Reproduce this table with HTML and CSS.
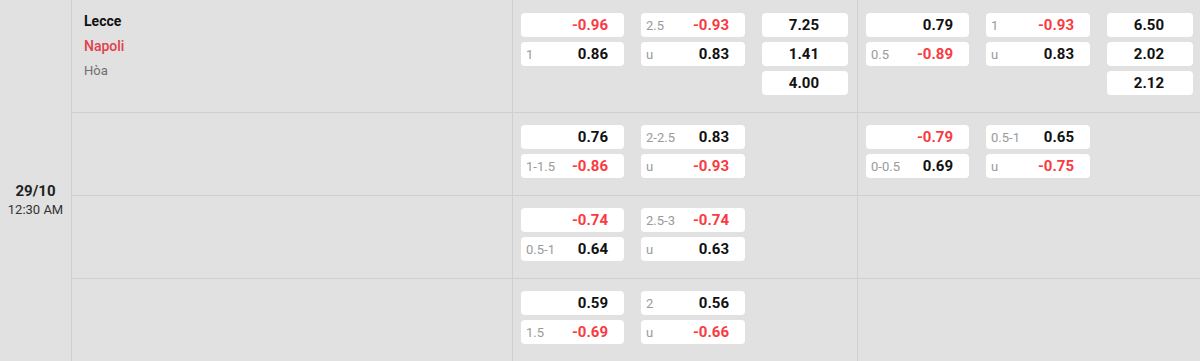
FILE: index.html
```html
<!DOCTYPE html>
<html>
<head>
<meta charset="utf-8">
<link rel="stylesheet" href="styles.css">
</head>
<body>
<div class="match">
  <div class="date">
    <div class="day">29/10</div>
    <div class="time">12:30 AM</div>
  </div>
  <div class="rows">
    <div class="row">
      <div class="teams">
        <div class="home">Lecce</div>
        <div class="away">Napoli</div>
        <div class="draw">Hòa</div>
      </div>
      <div class="odds">
        <div class="col">
          <div class="cell"><span class="v neg">-0.96</span></div>
          <div class="cell"><span class="lbl">1</span><span class="v">0.86</span></div>
        </div>
        <div class="col">
          <div class="cell"><span class="lbl">2.5</span><span class="v neg">-0.93</span></div>
          <div class="cell"><span class="lbl">u</span><span class="v">0.83</span></div>
        </div>
        <div class="col x12">
          <div class="cell"><span class="v">7.25</span></div>
          <div class="cell"><span class="v">1.41</span></div>
          <div class="cell"><span class="v">4.00</span></div>
        </div>
      </div>
      <div class="odds half">
        <div class="col">
          <div class="cell"><span class="v">0.79</span></div>
          <div class="cell"><span class="lbl">0.5</span><span class="v neg">-0.89</span></div>
        </div>
        <div class="col">
          <div class="cell"><span class="lbl">1</span><span class="v neg">-0.93</span></div>
          <div class="cell"><span class="lbl">u</span><span class="v">0.83</span></div>
        </div>
        <div class="col x12">
          <div class="cell"><span class="v">6.50</span></div>
          <div class="cell"><span class="v">2.02</span></div>
          <div class="cell"><span class="v">2.12</span></div>
        </div>
      </div>
    </div>

    <div class="row">
      <div class="teams"></div>
      <div class="odds">
        <div class="col">
          <div class="cell"><span class="v">0.76</span></div>
          <div class="cell"><span class="lbl">1-1.5</span><span class="v neg">-0.86</span></div>
        </div>
        <div class="col">
          <div class="cell"><span class="lbl">2-2.5</span><span class="v">0.83</span></div>
          <div class="cell"><span class="lbl">u</span><span class="v neg">-0.93</span></div>
        </div>
      </div>
      <div class="odds half">
        <div class="col">
          <div class="cell"><span class="v neg">-0.79</span></div>
          <div class="cell"><span class="lbl">0-0.5</span><span class="v">0.69</span></div>
        </div>
        <div class="col">
          <div class="cell"><span class="lbl">0.5-1</span><span class="v">0.65</span></div>
          <div class="cell"><span class="lbl">u</span><span class="v neg">-0.75</span></div>
        </div>
      </div>
    </div>

    <div class="row">
      <div class="teams"></div>
      <div class="odds">
        <div class="col">
          <div class="cell"><span class="v neg">-0.74</span></div>
          <div class="cell"><span class="lbl">0.5-1</span><span class="v">0.64</span></div>
        </div>
        <div class="col">
          <div class="cell"><span class="lbl">2.5-3</span><span class="v neg">-0.74</span></div>
          <div class="cell"><span class="lbl">u</span><span class="v">0.63</span></div>
        </div>
      </div>
      <div class="odds half"></div>
    </div>

    <div class="row">
      <div class="teams"></div>
      <div class="odds">
        <div class="col">
          <div class="cell"><span class="v">0.59</span></div>
          <div class="cell"><span class="lbl">1.5</span><span class="v neg">-0.69</span></div>
        </div>
        <div class="col">
          <div class="cell"><span class="lbl">2</span><span class="v">0.56</span></div>
          <div class="cell"><span class="lbl">u</span><span class="v neg">-0.66</span></div>
        </div>
      </div>
      <div class="odds half"></div>
    </div>
  </div>
</div>
</body>
</html>
```

FILE: styles.css
```css
html, body {
  margin: 0;
  padding: 0;
  background: #e1e1e1;
  font-family: Roboto, "Liberation Sans", Arial, sans-serif;
  color: #111;
}

.match {
  display: flex;
  width: 1200px;
  min-height: 361px;
}

.date {
  width: 72px;
  border-right: 1px solid #cfcfcf;
  display: flex;
  flex-direction: column;
  align-items: center;
  justify-content: center;
  padding-top: 38px;
  box-sizing: border-box;
  flex: none;
}

.day {
  font-size: 15px;
  font-weight: 700;
  line-height: 20px;
  color: #222;
}

.time {
  font-size: 13px;
  line-height: 18px;
  color: #333;
}

.rows {
  flex: 1;
  display: flex;
  flex-direction: column;
}

.row {
  display: grid;
  grid-template-columns: 441px 345px 342px;
}

.row:last-child {
  flex: 1;
}

.row + .row {
  border-top: 1px solid #cfcfcf;
}

.teams {
  border-right: 1px solid #cfcfcf;
  padding: 12px 0 0 12px;
  display: flex;
  flex-direction: column;
  gap: 7px;
}

.teams > div {
  line-height: 18px;
}

.home {
  font-size: 14px;
  font-weight: 700;
  color: #111;
}

.away {
  font-size: 14px;
  font-weight: 500;
  color: #e2404b;
}

.draw {
  font-size: 13px;
  color: #6f6f6f;
}

.odds {
  display: grid;
  grid-template-columns: 103px 104px 86px;
  grid-auto-rows: min-content;
  column-gap: 17px;
  align-items: start;
  padding: 12px 0 17px 8px;
  border-right: 1px solid #cfcfcf;
}

.row:first-child .odds {
  padding-top: 13px;
}

.odds.half {
  border-right: none;
}

.col {
  display: flex;
  flex-direction: column;
  gap: 5px;
}

.cell {
  height: 24px;
  background: #fff;
  border-radius: 4px;
  display: flex;
  align-items: center;
  padding: 0 16px 0 5px;
}

.lbl {
  font-size: 13px;
  color: #9a9a9a;
}

.v {
  margin-left: auto;
  font-size: 15px;
  font-weight: 700;
  color: #111;
}

.v.neg {
  color: #fa3a3f;
}

.x12 .cell {
  padding-right: 29px;
}
```
